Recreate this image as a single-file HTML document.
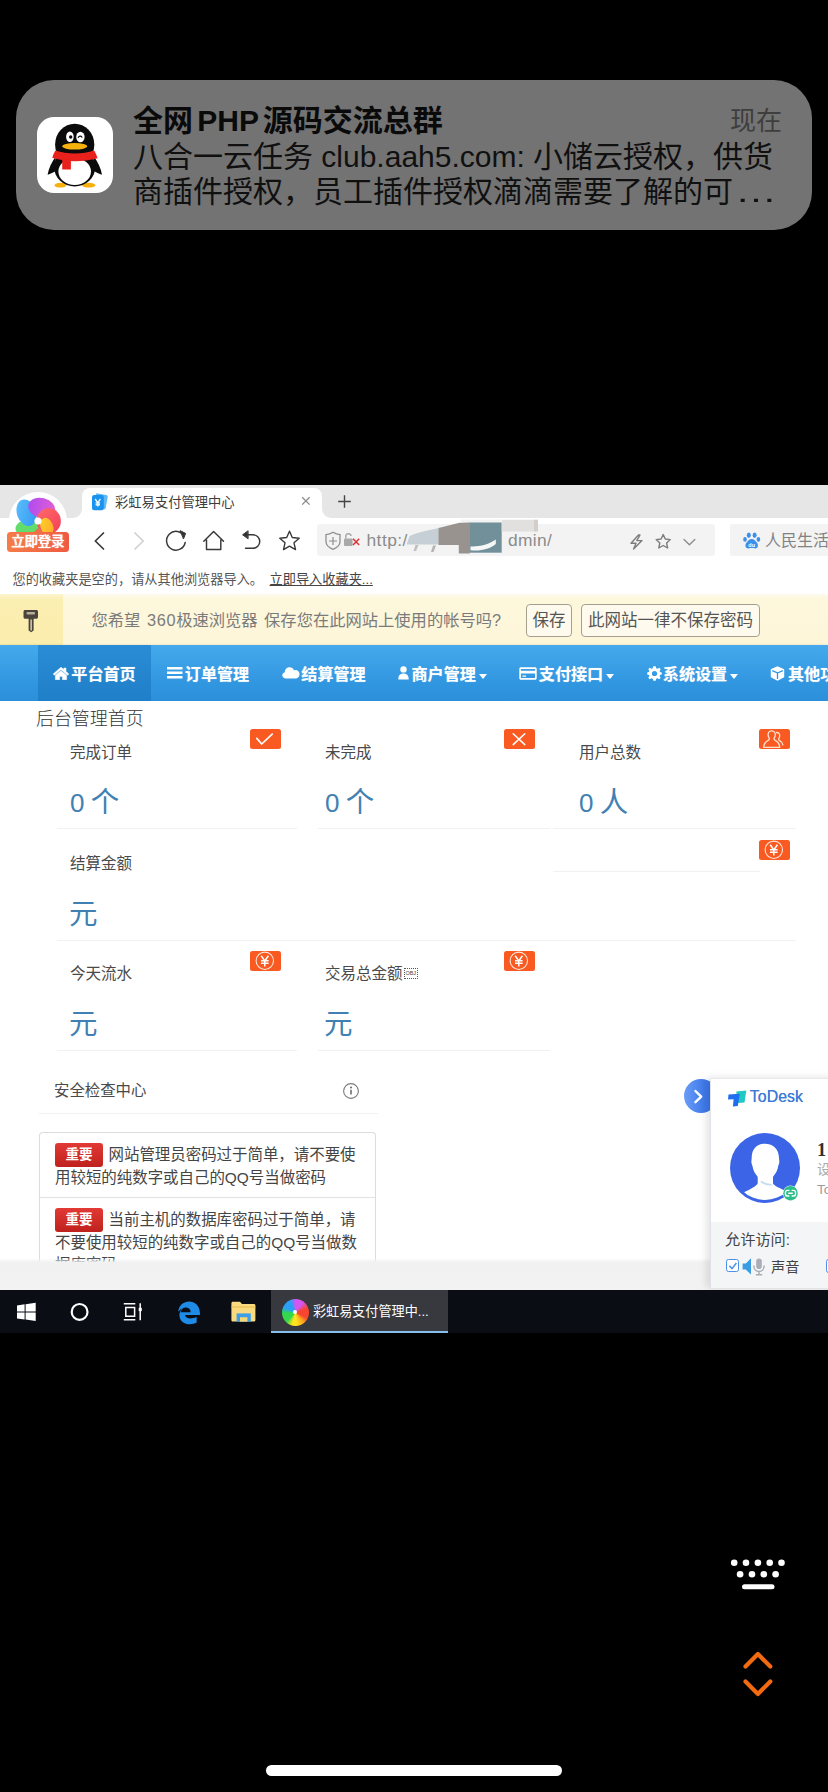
<!DOCTYPE html>
<html lang="zh-CN">
<head>
<meta charset="utf-8">
<title>屏幕录制</title>
<style>
*{box-sizing:border-box;margin:0;padding:0}
html,body{width:828px;height:1792px;background:#000;overflow:hidden}
body{position:relative;font-family:"Liberation Sans","Noto Sans CJK SC",sans-serif;color:#333}
.abs{position:absolute}
/* notification */
#notif{left:16px;top:80px;width:796px;height:150px;border-radius:38px;background:#737373}
#notif .icon{left:20.5px;top:36.7px;width:76px;height:76px;border-radius:17px;background:#fff;overflow:hidden}
#notif .title{left:117px;top:21px;font-size:30px;line-height:40px;font-weight:700;color:#0a0a0a;white-space:nowrap;word-spacing:-4px}
#notif .time{right:30px;top:22px;font-size:26px;line-height:38px;color:#3e3e3e;white-space:nowrap}
#notif .msg i{font-style:normal;display:inline-block;transform:scaleX(1.4);transform-origin:0 50%;margin-left:2px}
#notif .msg{left:117px;top:59px;width:690px;font-size:30px;line-height:35px;color:#101010;white-space:nowrap}
/* video */
#video{left:0;top:485px;width:828px;height:848.300px;overflow:hidden;background:#fff}
#vin{left:0;top:0;width:828px;height:849px}
#tabstrip{left:0;top:0;width:828px;height:33px;background:#e6e6e6}
#tabstrip .lcorner{left:62px;top:13px;width:20px;height:20px;background:#fff}
#tabstrip .lcorner i{position:absolute;left:0;top:0;width:20px;height:20px;background:#e6e6e6;border-radius:0 0 9px 0}
#tabstrip .rcorner{left:322px;top:13px;width:20px;height:20px;background:#fff}
#tabstrip .rcorner i{position:absolute;left:0;top:0;width:20px;height:20px;background:#e6e6e6;border-radius:0 0 0 9px}
#tab{left:82px;top:3px;width:240px;height:31px;background:#fff;border-radius:8px 8px 0 0}
#tab .ttl{left:33px;top:6.200px;font-size:13.300px;line-height:18px;color:#3c3c3c;white-space:nowrap}
#toolbar{left:0;top:33px;width:828px;height:45px;background:#fff}
#avatarbg{left:9.200px;top:7.200px;width:57.500px;height:57.500px;border-radius:50%;background:#fff}
#avatar{left:9.900px;top:8px;width:56px;height:56px;border-radius:50%;overflow:hidden;filter:blur(.7px)}
#loginbadge{left:6.700px;top:47.300px;width:62.200px;height:19.800px;border-radius:3.5px;background:linear-gradient(90deg,#f57c48,#ef5a42);color:#fff;font-weight:500;font-size:13.500px;line-height:19px;text-align:center;white-space:nowrap;letter-spacing:-.2px;text-shadow:0 0 .8px #fff,0 0 1.500px rgba(255,255,255,.5)}
#loginbadge:before{content:"";position:absolute;left:27px;top:-4px;border:4.5px solid transparent;border-top:0;border-bottom:4.5px solid #f26c45}
#addr{left:317px;top:38.500px;width:398px;height:32.500px;background:#f3f3f3;border-radius:3px}
#addr .url{top:4.500px;font-size:17.4px;line-height:24px;color:#8c8c8c;white-space:nowrap}
#rbox{left:730px;top:38.500px;width:110px;height:32.500px;background:#f3f3f3;border-radius:3px}
#rbox .t{left:35px;top:5px;font-size:16px;line-height:24px;color:#828282;white-space:nowrap}
#bookmarks{left:0;top:78px;width:828px;height:32px;background:#fff;font-size:13.200px;color:#555}
#bookmarks .t{left:12.500px;top:7.500px;line-height:18px;white-space:nowrap}
#bookmarks u{margin-left:6.500px;color:#444}
#infobar{left:0;top:109px;width:828px;height:51px;background:linear-gradient(#fefbee 0,#fdf7dc 5px,#fdf6d9 100%)}
#infobar .k{left:0;top:0;width:63px;height:51px;background:linear-gradient(#fdf5cd 0,#fbeeb1 6px,#fbedad 100%)}
#infobar .q{left:91.5px;top:15px;font-size:16.3px;line-height:22px;color:#7b7b7b;white-space:nowrap;word-spacing:2px}
#infobar .q b{font-weight:400;letter-spacing:.7px}
#infobar .btn{top:9.5px;height:33px;border:1px solid #a3a090;border-radius:4px;background:#fefbee;font-size:16.5px;line-height:30px;color:#555;text-align:center;white-space:nowrap}
#nav{left:0;top:160px;width:828px;height:56px;background:linear-gradient(#45a9ec,#3196e0 70%,#2c8fd9);color:#fff;font-weight:700;font-size:16.100px;box-shadow:0 1px 3px rgba(0,0,0,.25)}
#nav .act{left:38px;top:0;width:112.5px;height:56px;background:linear-gradient(#2a8dd6,#1f7fc8)}
#nav .it{top:18.300px;line-height:22px;white-space:nowrap;text-shadow:0 0 1px rgba(255,255,255,.5)}
#nav .caret{display:inline-block;width:0;height:0;border:4.5px solid transparent;border-top:5px solid #fff;border-bottom:0;vertical-align:middle;margin-left:3px}
#content{left:0;top:216px;width:828px;height:562px;background:#fff}
#content .h{left:36px;top:6px;font-size:17.950px;line-height:24px;color:#333;white-space:nowrap;font-weight:300}
.lbl{font-size:15.5px;line-height:20px;color:#4a4a4a;white-space:nowrap}
.big{font-size:26px;line-height:34px;color:#4180b2;white-space:nowrap;font-weight:300}
.big b{font-weight:400;font-size:28.500px;line-height:34px;margin-left:-1px}
.bdg{width:31px;height:20px;border-radius:2.5px;background:#f95a22}
.hr{height:1px;background:#f1f1f1}
#sec{left:38.5px;top:430.500px;width:337.500px;height:140px;border:1px solid #dcdcdc;border-bottom:0;border-radius:4px 4px 0 0;background:#fff}
#sec .row{left:0;width:335.500px;padding:10px 15.500px 0;font-size:15.450px;line-height:21.700px;color:#444}
#sec .imp{display:inline-block;width:48px;height:24px;margin-right:5.500px;border-radius:3px;background:linear-gradient(#e23a35,#bf211d);color:#fff;font-weight:700;font-size:13.600px;line-height:23px;text-align:center;vertical-align:1px}
#todesk{left:709.500px;top:592.500px;width:130px;height:210px;background:#fff;border-left:1px solid #dfe2e6;border-top:1px solid #e6e8eb;box-shadow:-3px 0 8px rgba(0,0,0,.12)}
#todesk .g{left:0;top:143px;width:130px;height:66px;background:#f4f5f7}
#statusbar{left:0;top:773px;width:828px;height:32px;background:linear-gradient(rgba(241,241,241,0) 0,#f1f1f1 4.500px,#f2f2f2 100%)}
#taskbar{left:0;top:804.800px;width:828px;height:44px;background:#0b0d15}
/* bottom */
#homebar{left:266px;top:1765px;width:296px;height:11px;border-radius:6px;background:#fff}
</style>
</head>
<body>

<!-- ===== notification ===== -->
<div id="notif" class="abs">
  <div class="icon abs">
    <svg width="76" height="76" viewBox="0 0 76 76">
      <ellipse cx="23.4" cy="68.2" rx="5.8" ry="2.4" fill="#f6b10c"/>
      <ellipse cx="51.8" cy="68.2" rx="6.4" ry="2.4" fill="#f6b10c"/>
      <path d="M18.6 39.5C15 45 11.5 51.5 10.6 57.8C13.5 57 16.5 55.5 19 53.5Z" fill="#0b0b0b"/>
      <path d="M57 39.5C60.6 45 64.1 51.5 65 57.8C62.1 57 59.1 55.5 56.6 53.5Z" fill="#0b0b0b"/>
      <ellipse cx="37.7" cy="27.5" rx="19.6" ry="20.8" fill="#0b0b0b"/>
      <ellipse cx="37.7" cy="50" rx="20.6" ry="19.6" fill="#0b0b0b"/>
      <ellipse cx="37.7" cy="54.6" rx="16.3" ry="13.4" fill="#fff"/>
      <path d="M18.4 33.6C30 37.4 45.5 37.4 57.2 33.6C58.6 36 59.8 38.6 60.6 41.2C45 45.2 30 45.2 15.2 40.8C16 38.2 17 35.8 18.4 33.6Z" fill="#e8211d"/>
      <path d="M25.2 42.5H33.9V52.6H25.2Z" fill="#e8211d"/>
      <ellipse cx="37.7" cy="29.3" rx="12.5" ry="3.3" fill="#f6b10c"/>
      <ellipse cx="32.9" cy="19.8" rx="3.8" ry="5.3" fill="#fff"/>
      <ellipse cx="43.4" cy="20" rx="4.2" ry="5.3" fill="#fff"/>
      <circle cx="33.7" cy="20" r="1.7" fill="#0b0b0b"/>
      <path d="M41.2 20.6C42 18.8 44 18.6 45 20.2" stroke="#0b0b0b" stroke-width="1.1" fill="none" stroke-linecap="round"/>
    </svg>
  </div>
  <div class="title abs">全网 PHP 源码交流总群</div>
  <div class="time abs">现在</div>
  <div class="msg abs">八合一云任务 club.aah5.com: 小储云授权，供货<br>商插件授权，员工插件授权滴滴需要了解的可<i>…</i></div>
</div>

<!-- ===== video ===== -->
<div id="video" class="abs">
<div id="vin" class="abs">
  <div id="tabstrip" class="abs">
    <div class="lcorner abs"><i></i></div>
    <div class="rcorner abs"><i></i></div>
    <svg class="abs" style="left:337px;top:8.500px" width="15" height="15" viewBox="0 0 15 15"><path d="M7.5 1.2V13.8M1.2 7.5H13.8" stroke="#444" stroke-width="1.4" fill="none"/></svg>
  </div>
  <div id="tab" class="abs">
    <svg class="abs" style="left:8px;top:4px" width="20" height="20" viewBox="0 0 20 20">
      <path d="M6.200 1.300L16.300 3.100C17.300 3.300 17.900 4 17.700 5L15.700 16C15.500 17 14.800 17.400 13.800 17.200L5 15.600Z" fill="#5fb9f6"/>
      <rect x="2" y="3" width="11.800" height="15.200" rx="2.200" fill="#1a93ee"/>
      <path d="M5.200 7L7.800 10.800L10.400 7M7.800 10.800V14.400M5.600 11H10M5.600 12.800H10" stroke="#eaf5ff" stroke-width="1.400" fill="none"/>
    </svg>
    <div class="ttl abs">彩虹易支付管理中心</div>
    <svg class="abs" style="left:217.700px;top:6.500px" width="12" height="12" viewBox="0 0 12 12"><path d="M2.2 2.2L9.6 9.6M9.6 2.2L2.2 9.6" stroke="#8a8a8a" stroke-width="1.3" fill="none"/></svg>
  </div>
  <div id="toolbar" class="abs"></div>
  <!-- nav icons -->
  <svg class="abs" style="left:88px;top:40px" width="224" height="32" viewBox="88 525 224 32" fill="none" stroke="#383838" stroke-width="1.45" stroke-linecap="round" stroke-linejoin="round">
    <path d="M103.500 533L95.300 541L103.500 549" stroke-width="1.700"/>
    <path d="M135 533L143.200 541L135 549" stroke="#d0d0d0" stroke-width="1.700"/>
    <path d="M184.2 536.2A9.4 9.400 0 1 0 185.200 542.5"/>
    <path d="M180.500 530.8L185.600 533.4L183.600 538.6Z" fill="#333" stroke-width="1"/>
    <path d="M203.800 541.3L213.600 531.600L223.500 541.3M206.500 540V549.500H220.800V540"/>
    <path d="M246 534.800H253A6.750 6.750 0 0 1 253 548.300H245.500"/>
    <path d="M247.800 531L242.600 534.800L247.800 538.600Z" fill="#333" stroke-width="1"/>
    <path d="M289.500 531.200L292.300 537.500L299.200 538.200L294 542.800L295.500 549.600L289.500 546.100L283.500 549.600L285 542.800L279.800 538.200L286.700 537.500Z" stroke-width="1.400"/>
  </svg>
  <!-- address bar -->
  <div id="addr" class="abs">
    <svg class="abs" style="left:7px;top:7.500px" width="40" height="20" viewBox="324 531 40 20" fill="none">
      <path d="M333 532.300C335.200 533.700 337.500 534.400 340 534.600V541.500C340 545 337.500 547.600 333 549.400C328.500 547.600 326 545 326 541.500V534.600C328.500 534.400 330.800 533.700 333 532.300Z" stroke="#8f8f8f" stroke-width="1.300"/>
      <path d="M333 537V545M329 541H337" stroke="#8f8f8f" stroke-width="1.200"/>
      <rect x="344" y="538.500" width="8.600" height="7.500" rx="1" fill="#a9a9a9"/>
      <path d="M345.800 538.500V536.500A2.600 2.600 0 0 1 351 536" stroke="#a9a9a9" stroke-width="1.500"/>
      <path d="M353 538.800L359.200 545M359.200 538.800L353 545" stroke="#e2353a" stroke-width="1.600"/>
    </svg>
    <div class="url abs" style="left:49.500px;letter-spacing:.45px">http:/</div>
    <div class="url abs" style="left:191px;letter-spacing:.3px">dmin/</div>
    <svg class="abs" style="left:300px;top:5.500px" width="90" height="22" viewBox="617 529 90 22" fill="none" stroke="#7d7d7d" stroke-width="1.400" stroke-linejoin="round" stroke-linecap="round">
      <path d="M638.500 535L631 543.200H636L633.600 549L642 540.600H636.800L640 535Z"/>
      <path d="M663.200 534.600L665.300 539L670.300 539.600L666.600 543L667.600 548L663.200 545.500L658.800 548L659.800 543L656.100 539.600L661.100 539Z"/>
      <path d="M684 539.500L689.400 544.700L694.800 539.500" stroke="#8d8d8d"/>
    </svg>
  </div>
  <!-- blurred url blobs -->
  <svg class="abs" style="left:395px;top:30px;filter:blur(.6px)" width="150" height="44" viewBox="395 515 150 44">
    <path d="M406.600 544.500L409.500 536.300C414 533.500 424 531.400 438.800 528.100V544.500Z" fill="#c5cfd5"/>
    <path d="M438.500 528.100L459.500 522.700L469.800 522.300V553.600H458.800V545H438.500Z" fill="#98938f"/>
    <rect x="469.400" y="522.300" width="32.300" height="30.400" fill="#72909a"/>
    <path d="M501.700 519.800H538V531.400H501.700Z" fill="#e2e0de"/>
    <path d="M534 519.800H538V531.400H534Z" fill="#d2cecb"/>
    <path d="M460.700 519.400H501.700V522.300H460.700Z" fill="#f3f3f3"/>
    <path d="M470.500 546.500C479 547 489 544.500 495.800 539.600V544C490 549 480 551.500 470.500 550.200Z" fill="#f6f8f8"/>
    <path d="M415.500 545L418.500 545L416 551H413.500Z" fill="#aaa" opacity=".7"/>
    <path d="M433 545.500L436 545.500L433.500 552H431Z" fill="#999" opacity=".7"/>
  </svg>
  <div id="rbox" class="abs">
    <svg class="abs" style="left:12px;top:7.500px" width="20" height="20" viewBox="0 0 20 20">
      <g fill="#3d8fe8">
        <ellipse cx="6.800" cy="4.200" rx="2" ry="2.700"/><ellipse cx="12.600" cy="4.200" rx="2" ry="2.700"/>
        <ellipse cx="3" cy="8.400" rx="1.800" ry="2.400"/><ellipse cx="16.400" cy="8.400" rx="1.800" ry="2.400"/>
        <path d="M9.700 8C12 8 13.200 9.800 14.800 11.600C16.600 13.600 16.400 17.400 13.200 17.400C11.800 17.400 11 17 9.700 17C8.400 17 7.600 17.400 6.200 17.400C3 17.400 2.800 13.600 4.600 11.600C6.200 9.800 7.400 8 9.700 8Z"/>
      </g>
      <text x="9.700" y="15.600" font-size="5.500" font-weight="700" fill="#fff" text-anchor="middle" font-family="Liberation Sans, sans-serif">du</text>
    </svg>
    <div class="t abs">人民生活</div>
  </div>
  <!-- avatar -->
  <div id="avatarbg" class="abs"></div>
  <div id="avatar" class="abs">
    <svg width="56" height="56" viewBox="-28 -28 56 56">
      <defs>
        <linearGradient id="gB" x1="0" y1="0" x2="1" y2="1"><stop offset="0" stop-color="#5fc0fb"/><stop offset="1" stop-color="#2f97f3"/></linearGradient>
        <linearGradient id="gM" x1="0" y1="0" x2="1" y2="0"><stop offset="0" stop-color="#b04cf0"/><stop offset="1" stop-color="#e25fd2"/></linearGradient>
        <linearGradient id="gR" x1="0" y1="0" x2="1" y2="1"><stop offset="0" stop-color="#ff6a6a"/><stop offset="1" stop-color="#f2405a"/></linearGradient>
        <linearGradient id="gY" x1="0" y1="0" x2="1" y2="1"><stop offset="0" stop-color="#ffd428"/><stop offset="1" stop-color="#ffa62a"/></linearGradient>
      </defs>
      <ellipse cx="-9" cy="7.500" rx="13.500" ry="9" fill="#62dc6c"/>
      <ellipse cx="-11.500" cy="-8.300" rx="9.600" ry="13.600" transform="rotate(-18 -11.500 -8.300)" fill="url(#gB)"/>
      <ellipse cx="3.700" cy="-13" rx="13.700" ry="10" transform="rotate(14 3.700 -13)" fill="url(#gM)"/>
      <ellipse cx="10.700" cy="0" rx="12.200" ry="12.800" fill="url(#gR)"/>
      <ellipse cx="8.800" cy="5.500" rx="6.300" ry="9" transform="rotate(-22 8.800 5.500)" fill="url(#gY)"/>
      <circle cx="0" cy="0" r="3.600" fill="#fff"/>
    </svg>
  </div>
  <div id="loginbadge" class="abs">立即登录</div>
  <div id="bookmarks" class="abs"><div class="t abs">您的收藏夹是空的，请从其他浏览器导入。<u>立即导入收藏夹...</u></div></div>
  <div id="infobar" class="abs">
    <div class="k abs"></div>
    <svg class="abs" style="left:22px;top:15px" width="18" height="24" viewBox="0 0 18 24">
      <path d="M3.200 1H14.300C15.400 1 16 1.700 16 2.700V8C16 9.200 15.300 9.800 14.300 9.800H11.600V21.600L9.200 23.200L6.600 21.600V9.800H3.200C2.200 9.800 1.500 9.200 1.500 8V2.700C1.500 1.700 2.200 1 3.200 1Z" fill="#4a443d"/>
      <rect x="4.500" y="3" width="8.500" height="2.400" rx="1" fill="#b7ad98"/>
      <path d="M8.300 10.500H10V21.500H8.300Z" fill="#c9bfa6"/>
    </svg>
    <div class="q abs">您希望 <b>360</b>极速浏览器 保存您在此网站上使用的帐号吗?</div>
    <div class="btn abs" style="left:526px;width:46px">保存</div>
    <div class="btn abs" style="left:581px;width:179px">此网站一律不保存密码</div>
  </div>
  <div id="nav" class="abs">
    <div class="act abs"></div>
    <svg class="abs" style="left:53px;top:22px" width="16" height="13" viewBox="0 0 16 13"><path d="M8 0.200L0.200 6.900L1.300 8.200L8 2.700L14.700 8.200L15.800 6.900L13 4.500V1H10.800V2.600ZM2.400 8.300V12.800H6.600V9.400H9.400V12.800H13.600V8.300L8 3.700Z" fill="#fff" stroke="#fff" stroke-width=".5"/></svg>
    <div class="it abs" style="left:71.300px">平台首页</div>
    <svg class="abs" style="left:167px;top:22px" width="16" height="12" viewBox="0 0 16 12"><path d="M0 0H15.500V2.600H0ZM0 4.500H15.500V7.100H0ZM0 9H15.500V11.600H0Z" fill="#fff"/></svg>
    <div class="it abs" style="left:184.800px">订单管理</div>
    <svg class="abs" style="left:282px;top:22px" width="18" height="12" viewBox="0 0 18 12"><path d="M4 11.600C1.800 11.600 0.300 10.200 0.300 8.300C0.300 6.700 1.400 5.500 2.800 5.200C2.800 2.500 4.800 0.300 7.500 0.300C9.600 0.300 11.300 1.500 12 3.400C12.500 3.200 13 3.100 13.400 3.100C15.700 3.100 17.600 5 17.600 7.300C17.600 9.700 15.700 11.600 13.400 11.600Z" fill="#fff"/></svg>
    <div class="it abs" style="left:301.300px">结算管理</div>
    <svg class="abs" style="left:398px;top:21px" width="11" height="14" viewBox="0 0 11 14"><circle cx="5.500" cy="3.400" r="3.200" fill="#fff"/><path d="M0.300 13.500C0.300 9.500 1.800 7.400 5.500 7.400C9.200 7.400 10.700 9.500 10.700 13.500Z" fill="#fff"/></svg>
    <div class="it abs" style="left:411.500px">商户管理<span class="caret"></span></div>
    <svg class="abs" style="left:519px;top:22px" width="18" height="13" viewBox="0 0 18 13"><path d="M1.800 0.300H16.200C17 0.300 17.700 1 17.700 1.800V11.200C17.700 12 17 12.700 16.200 12.700H1.800C1 12.700 0.300 12 0.300 11.200V1.800C0.300 1 1 0.300 1.800 0.300ZM1.900 2V3.800H16.100V2ZM1.900 6.400V11H16.100V6.400ZM3.400 8.500H7V9.800H3.400Z" fill="#fff" fill-rule="evenodd"/></svg>
    <div class="it abs" style="left:538.800px">支付接口<span class="caret"></span></div>
    <svg class="abs" style="left:646.500px;top:21px" width="15" height="15" viewBox="-7.500 -7.500 15 15"><path fill="#fff" fill-rule="evenodd" d="M-1.200 -7.300H1.200L1.700 -5.300L3 -4.700L4.800 -5.800L6.200 -4.300L5.100 -2.600L5.500 -1.400L7.300 -1V1L5.500 1.400L5.100 2.600L6.200 4.300L4.800 5.800L3 4.700L1.700 5.300L1.200 7.300H-1.200L-1.700 5.300L-3 4.700L-4.800 5.800L-6.200 4.300L-5.100 2.600L-5.500 1.400L-7.300 1V-1L-5.500 -1.400L-5.100 -2.600L-6.200 -4.300L-4.800 -5.800L-3 -4.700L-1.700 -5.300ZM0 -2.600A2.600 2.600 0 1 0 0 2.600A2.600 2.600 0 1 0 0 -2.600Z"/></svg>
    <div class="it abs" style="left:662.800px">系统设置<span class="caret"></span></div>
    <svg class="abs" style="left:769.500px;top:21px" width="15" height="15" viewBox="0 0 15 15"><path d="M7.500 0.300L14.200 3.300V11.200L7.500 14.700L0.800 11.200V3.300Z" fill="#fff"/><path d="M2.300 4.600L7.500 7V13M7.500 7L12.800 4.600" stroke="#3196e0" stroke-width="1.300" fill="none"/></svg>
    <div class="it abs" style="left:788px">其他功能</div>
  </div>
<div id="content" class="abs">
    <div class="h abs">后台管理首页</div>
    <div class="lbl abs" style="left:70px;top:41.5px">完成订单</div>
    <div class="big abs" style="left:70px;top:83.5px">0 <b>个</b></div>
    <div class="bdg abs" style="left:250px;top:28.299999999999955px"><svg width="31" height="20" viewBox="0 0 31 20"><path d="M6.800 9.400L11.700 15L22.200 5.200" stroke="#fff" stroke-width="1.700" fill="none" stroke-linecap="round" stroke-linejoin="round"/></svg></div>
    <div class="lbl abs" style="left:325px;top:41.5px">未完成</div>
    <div class="big abs" style="left:325px;top:83.5px">0 <b>个</b></div>
    <div class="bdg abs" style="left:504.3px;top:28.299999999999955px"><svg width="31" height="20" viewBox="0 0 31 20"><path d="M9.200 4.800L20.800 15.600M20.800 4.800L9.200 15.600" stroke="#fff" stroke-width="1.500" fill="none" stroke-linecap="round"/></svg></div>
    <div class="lbl abs" style="left:579px;top:41.5px">用户总数</div>
    <div class="big abs" style="left:579px;top:83.5px">0 <b>人</b></div>
    <div class="bdg abs" style="left:758.8px;top:28.299999999999955px"><svg width="31" height="20" viewBox="0 0 31 20"><g fill="none" stroke="#ffe3d0" stroke-width="1.300" stroke-linejoin="round"><path d="M17 3.600C19.500 3 21.200 5 20.600 7.500C20.400 8.600 20 9.400 19.600 9.900C19.500 10.800 20 11.300 21 11.800C22.800 12.700 23.800 14.200 24 16.400"/><path d="M12.600 1.800C15.200 1.800 16.600 3.700 16.300 6.200C16.100 7.600 15.600 8.600 15 9.300C14.900 10.400 15.300 11 16.500 11.600C19 12.800 20.500 14.800 20.800 18.400H4.600C4.900 14.800 6.400 12.800 8.900 11.600C10.100 11 10.500 10.400 10.400 9.300C9.800 8.600 9.300 7.600 9.100 6.200C8.800 3.700 10.200 1.800 12.600 1.800Z"/></g></svg></div>
    <div class="hr abs" style="left:57px;top:127px;width:240px"></div>
    <div class="hr abs" style="left:318px;top:127px;width:232px"></div>
    <div class="hr abs" style="left:553px;top:127px;width:243px"></div>
    <div class="lbl abs" style="left:70px;top:152.5px">结算金额</div>
    <div class="big abs" style="left:70px;top:195.5px"><b>元</b></div>
    <div class="bdg abs" style="left:758.8px;top:139px"><svg width="31" height="20" viewBox="0 0 31 20"><circle cx="14.800" cy="9.800" r="8.700" fill="none" stroke="#ffe9dc" stroke-width="1.100"/><path d="M11.200 4.800L14.800 10L18.400 4.800M14.800 10V15.600M11 9.800H18.600M11 12.300H18.600" stroke="#fff" stroke-width="1.500" fill="none"/></svg></div>
    <div class="hr abs" style="left:553px;top:170px;width:207px"></div>
    <div class="hr abs" style="left:57px;top:239px;width:739px"></div>
    <div class="lbl abs" style="left:70px;top:263px">今天流水</div>
    <div class="big abs" style="left:70px;top:306px"><b>元</b></div>
    <div class="bdg abs" style="left:250px;top:249.79999999999995px"><svg width="31" height="20" viewBox="0 0 31 20"><circle cx="14.800" cy="9.800" r="8.700" fill="none" stroke="#ffe9dc" stroke-width="1.100"/><path d="M11.200 4.800L14.800 10L18.400 4.800M14.800 10V15.600M11 9.800H18.600M11 12.300H18.600" stroke="#fff" stroke-width="1.500" fill="none"/></svg></div>
    <div class="lbl abs" style="left:325px;top:263px">交易总金额<span style="display:inline-block;width:14.500px;height:11px;margin-left:1px;border:1px dotted #555;border-radius:1px;font-size:5.500px;line-height:9px;text-align:center;color:#444;vertical-align:0;letter-spacing:0;overflow:hidden">OBJ</span></div>
    <div class="big abs" style="left:325px;top:306px"><b>元</b></div>
    <div class="bdg abs" style="left:504.3px;top:249.79999999999995px"><svg width="31" height="20" viewBox="0 0 31 20"><circle cx="14.800" cy="9.800" r="8.700" fill="none" stroke="#ffe9dc" stroke-width="1.100"/><path d="M11.200 4.800L14.800 10L18.400 4.800M14.800 10V15.600M11 9.800H18.600M11 12.300H18.600" stroke="#fff" stroke-width="1.500" fill="none"/></svg></div>
    <div class="hr abs" style="left:57px;top:349px;width:240px"></div>
    <div class="hr abs" style="left:318px;top:349px;width:232px"></div>
    <div class="lbl abs" style="left:54px;top:380px;font-size:15.400px">安全检查中心</div>
    <svg class="abs" style="left:342px;top:381px" width="18" height="18" viewBox="0 0 18 18"><circle cx="9" cy="9" r="7.400" fill="none" stroke="#7a7a7a" stroke-width="1.100"/><path d="M9 7.800V12.600" stroke="#666" stroke-width="1.500"/><circle cx="9" cy="5.600" r="1" fill="#666"/></svg>
    <div class="hr abs" style="left:38.5px;top:412px;width:339px"></div>
    <div id="sec" class="abs">
      <div class="row abs" style="top:0;height:65.500px;border-bottom:1px solid #e2e2e2"><span class="imp">重要</span>网站管理员密码过于简单，请不要使用较短的纯数字或自己的QQ号当做密码</div>
      <div class="row abs" style="top:65.500px"><span class="imp">重要</span>当前主机的数据库密码过于简单，请不要使用较短的纯数字或自己的QQ号当做数据库密码</div>
    </div>
  </div>
  <div id="statusbar" class="abs"></div>
  <!-- ToDesk floating panel -->
  <div class="abs" style="left:683.500px;top:593.600px;width:34.800px;height:34.800px;border-radius:50%;background:linear-gradient(90deg,#6a9df7,#3f79ea 60%,#3a73e8)"></div>
  <svg class="abs" style="left:690px;top:602px" width="16" height="18" viewBox="0 0 16 18"><path d="M5.400 4L11.200 9.600L5.400 15.200" stroke="#fff" stroke-width="2.400" fill="none" stroke-linecap="round" stroke-linejoin="round"/></svg>
  <div id="todesk" class="abs">
    <svg class="abs" style="left:15px;top:8px" width="24" height="22" viewBox="0 0 24 22">
      <path d="M10.200 4.500L20.300 3.400L18.500 15.400L11.800 16Z" fill="#1fc8c0"/>
      <path d="M2.500 7.500L13.800 6.700L11.800 19L6.900 19.500L7.600 12.300L2 12.500Z" fill="#1f6ef0"/>
    </svg>
    <div class="abs" style="left:39.300px;top:7px;font-size:15.800px;line-height:22px;color:#407bd8;white-space:nowrap;letter-spacing:.1px;text-shadow:0 0 .6px #407bd8">ToDesk</div>
    <svg class="abs" style="left:16.700px;top:51.500px" width="76" height="76" viewBox="0 0 76 76">
      <defs><clipPath id="avc"><circle cx="38" cy="38" r="32"/></clipPath></defs>
      <circle cx="38" cy="38" r="35" fill="#3b64e6"/>
      <g clip-path="url(#avc)" fill="#fff">
        <path d="M37.800 13.800C46.500 13.800 52 19.500 52 28C52 29.500 52.600 31 52.200 33C51.800 35 51.200 35.500 51 37C50.200 42 47.500 44.500 46 47V53.500C47 55.500 52 58 59 61L62 80H14L16.600 62.500C23 59.500 29.500 56 30.700 53.500V47C29.200 44.500 26.500 42 25.700 37C25.500 35.500 24.900 35 24.500 33C24.100 31 24.700 29.500 24.700 28C24.700 19.500 29.100 13.800 37.800 13.800Z"/>
      </g>
      <path d="M34.500 51.800C37 53.600 40.500 54.800 43.800 54.600" stroke="#c4dcf0" stroke-width="1.800" fill="none" stroke-linecap="round"/>
      <circle cx="63.500" cy="63.200" r="7.700" fill="#e9f7f1"/>
      <circle cx="63.500" cy="63.200" r="7.200" fill="#2cbc8a"/>
      <path d="M62.400 60.400H60.200C58.800 60.400 58.400 61.500 58.400 63.200C58.400 64.900 58.800 66 60.200 66H62.400M64.600 60.400H66.800C68.200 60.400 68.600 61.500 68.600 63.200C68.600 64.900 68.200 66 66.800 66H64.600M61.200 63.200H65.800" stroke="#fff" stroke-width="1.400" fill="none"/>
    </svg>
    <div class="abs" style="left:106.500px;top:59px;font-family:'Liberation Serif','Noto Serif CJK SC',serif;font-weight:700;font-size:18.500px;line-height:24px;color:#2f2f2f">1</div>
    <div class="abs" style="left:106.500px;top:82.500px;font-size:13.500px;line-height:18px;color:#a9a9a9;white-space:nowrap">设备</div>
    <div class="abs" style="left:106.500px;top:102.500px;font-size:13.500px;line-height:18px;color:#9a9a9a;white-space:nowrap">ToDesk</div>
    <div class="g abs"></div>
    <div class="abs" style="left:14.500px;top:150px;font-size:15.200px;line-height:22px;color:#444;white-space:nowrap">允许访问:</div>
    <div class="abs" style="left:15.200px;top:180.500px;width:13px;height:13px;border:1.600px solid #4b8fe8;border-radius:2.500px;background:#fff"></div>
    <svg class="abs" style="left:15px;top:180.200px" width="14" height="14" viewBox="0 0 14 14"><path d="M3.400 6.800L6 9.600L10.400 4" stroke="#4b8fe8" stroke-width="1.500" fill="none"/></svg>
    <svg class="abs" style="left:30.200px;top:178px" width="28" height="20" viewBox="0 0 28 20">
      <path d="M1.600 6.400H4.800L10 1.200V17.600L4.800 12.600H1.600Z" fill="#3a9ce2"/>
      <rect x="15.200" y="1.600" width="5.600" height="10.400" rx="2.800" fill="#a9aeb6"/>
      <path d="M12.800 8.400C12.800 16.400 23.200 16.400 23.200 8.400M18 14.600V17.600M14.800 17.800H21.200" stroke="#a9aeb6" stroke-width="1.500" fill="none"/>
    </svg>
    <div class="abs" style="left:60.500px;top:178.500px;font-size:14.200px;line-height:20px;color:#444;white-space:nowrap">声音</div>
    <div class="abs" style="left:115.500px;top:180.500px;width:13.500px;height:13.500px;border:1.600px solid #4b8fe8;border-radius:2.500px;background:#fff"></div>
  </div>
  <div id="taskbar" class="abs">
    <svg class="abs" style="left:0;top:0" width="270" height="43" viewBox="0 1290 270 43">
      <path d="M17 1305.400L24.600 1304.300V1311.400H17ZM25.600 1304.200L35.700 1302.800V1311.400H25.600ZM17 1312.400H24.600V1319.500L17 1318.400ZM25.600 1312.400H35.700V1321L25.600 1319.600Z" fill="#fff"/>
      <circle cx="79.600" cy="1311.900" r="7.900" fill="none" stroke="#fff" stroke-width="2.200"/>
      <path d="M123.800 1303.700H135.300M123.800 1319.700H135.300M125.800 1307.400H134.600V1316.300H125.800ZM140.200 1303.200V1320.200" stroke="#fff" stroke-width="1.500" fill="none"/>
      <rect x="138.700" y="1307.800" width="3.100" height="3.300" fill="#fff"/>
      <path d="M231.400 1303.400C231.400 1302.400 232 1301.800 233 1301.800H240L242 1304H253.800C254.800 1304 255.400 1304.600 255.400 1305.600V1320C255.400 1321 254.800 1321.600 253.800 1321.600H233C232 1321.600 231.400 1321 231.400 1320Z" fill="#f9da7e"/>
      <path d="M231.400 1306H255.400V1308H231.400Z" fill="#e9bf55" opacity=".6"/>
      <path d="M236.600 1313.400H250.800V1321.600H236.600Z" fill="#3e9fe9"/>
      <path d="M240 1317.200H247.400V1321.600H240Z" fill="#f8d775"/>
    </svg>
    <svg class="abs" style="left:175.100px;top:8.800px" width="28.200" height="28.200" viewBox="0 0 24 24"><path fill="#1e8be6" d="M2.74 10.81c1.1-12.16 19.55-12.07 18.48 2.75H8.63c.05 2.9 4.67 4.07 9.81 1.8v4.72c-6.36 3.24-15.7.61-14.56-7.7.32-1.89 1.44-4.46 4.33-5.67-1.62 1.16-2.9 2.6-3.44 4.62h8.520c.34-4.72-6.100-5.970-10.550-.520z"/></svg>
    <div class="abs" style="left:270.500px;top:0;width:177.500px;height:43px;background:#38393f;border-bottom:2px solid #86bdea"></div>
    <div class="abs" style="left:282px;top:9px;width:27px;height:27px;border-radius:50%;background:conic-gradient(#d455f0 0deg,#d455f0 35deg,#f8452f 70deg,#f8452f 115deg,#ffa51e 140deg,#ffe31e 175deg,#ffe31e 195deg,#33d94a 225deg,#33d94a 265deg,#2a9ff5 295deg,#2a9ff5 335deg,#d455f0 360deg);filter:blur(.5px)"></div>
    <div class="abs" style="left:292.500px;top:19.800px;width:4.600px;height:4.600px;border-radius:50%;background:#fff;filter:blur(.5px)"></div>
    <div class="abs" style="left:313px;top:13px;font-size:13.100px;line-height:18px;color:#fff;white-space:nowrap">彩虹易支付管理中...</div>
  </div>
</div>
</div>

<!-- ===== bottom controls ===== -->
<svg class="abs" style="left:724px;top:1550px" width="70" height="50" viewBox="724 1550 70 50">
  <g fill="#fff">
    <circle cx="734.2" cy="1562.7" r="3.3"/><circle cx="746" cy="1562.7" r="3.3"/><circle cx="757.9" cy="1562.7" r="3.3"/><circle cx="769.7" cy="1562.7" r="3.3"/><circle cx="781.5" cy="1562.7" r="3.3"/>
    <circle cx="740.1" cy="1574.3" r="3.3"/><circle cx="752" cy="1574.3" r="3.3"/><circle cx="763.8" cy="1574.3" r="3.3"/><circle cx="775.6" cy="1574.3" r="3.3"/>
  </g>
  <path d="M744.5 1586.8H772" stroke="#fff" stroke-width="5" stroke-linecap="round" fill="none"/>
</svg>
<svg class="abs" style="left:734px;top:1640px" width="50" height="70" viewBox="734 1640 50 70">
  <path d="M745.5 1666.5L757.9 1654L770.3 1666.5M745.5 1681.5L757.9 1694L770.3 1681.5" stroke="#f36a10" stroke-width="4.2" stroke-linecap="round" stroke-linejoin="round" fill="none"/>
</svg>
<div id="homebar" class="abs"></div>

</body>
</html>
